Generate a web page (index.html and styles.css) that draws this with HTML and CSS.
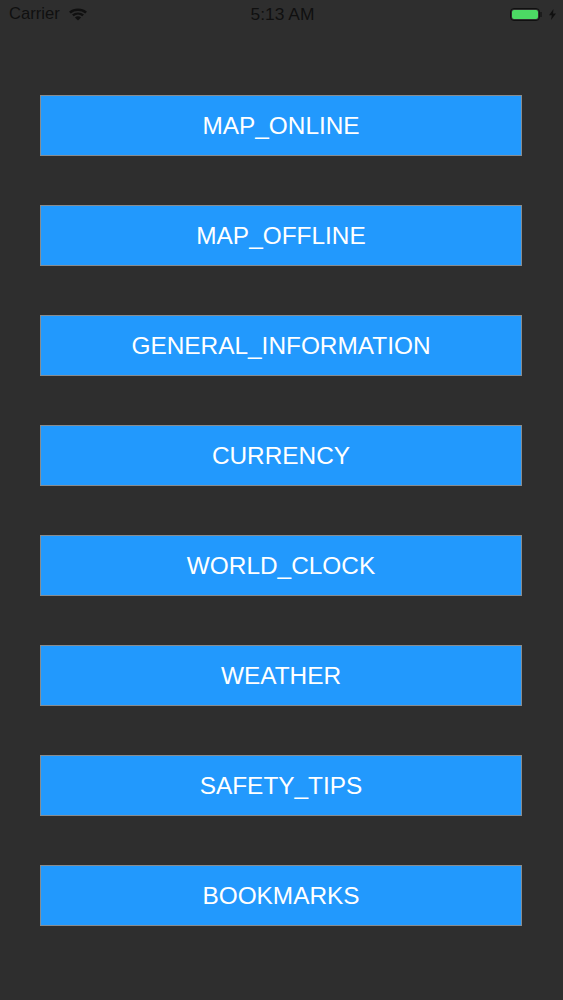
FILE: index.html
```html
<!DOCTYPE html>
<html lang="en">
<head>
    <meta charset="UTF-8">
    <meta name="viewport" content="width=device-width, initial-scale=1.0">
    <title>Menu</title>
    <link rel="stylesheet" href="styles.css">
</head>
<body>

    <div class="status-bar">
        <div class="status-left">
            <span>Carrier</span>
            <svg class="wifi" width="20" height="13" viewBox="0 0 20 15" preserveAspectRatio="none">
                <path d="M10 14.500 6.900 10.900a4.600 4.600 0 0 1 6.200 0z"/>
                <path d="M5.700 9.500 4 7.600a9 9 0 0 1 12 0l-1.700 1.900a6.500 6.500 0 0 0-8.600 0z"/>
                <path d="M2.800 6.300 1 4.300a13 13 0 0 1 18 0l-1.800 2a10.500 10.500 0 0 0-14.400 0z"/>
            </svg>
        </div>
        <div class="status-time">5:13 AM</div>
        <div class="status-right">
            <div class="battery"><div class="battery-level"></div></div>
            <div class="battery-nub"></div>
            <svg class="bolt" width="7" height="11" viewBox="0 0 7 12" preserveAspectRatio="none">
                <path d="M4.500 0 0 6.800h2.800L2 12l5-7.200H4z"/>
            </svg>
        </div>
    </div>

    <div class="menu">
        <button class="menu-button">MAP_ONLINE</button>
        <button class="menu-button">MAP_OFFLINE</button>
        <button class="menu-button">GENERAL_INFORMATION</button>
        <button class="menu-button">CURRENCY</button>
        <button class="menu-button">WORLD_CLOCK</button>
        <button class="menu-button">WEATHER</button>
        <button class="menu-button">SAFETY_TIPS</button>
        <button class="menu-button">BOOKMARKS</button>
    </div>

</body>
</html>
```

FILE: styles.css
```css
* {
    box-sizing: border-box;
    margin: 0;
    padding: 0;
    font-family: "Liberation Sans", Arial, sans-serif;
}

body {
    background-color: #2e2e2e;
    height: 1000px;
    overflow: hidden;
}

.status-bar {
    display: grid;
    grid-template-columns: 1fr auto 1fr;
    align-items: center;
    height: 28px;
    padding: 0 7px 0 9px;
    font-size: 16.600px;
    color: #101010;
}

.status-left {
    display: flex;
    align-items: center;
    gap: 8px;
}

.wifi {
    fill: #101010;
}

.status-time {
    font-size: 17.400px;
}

.status-right {
    display: flex;
    align-items: center;
    justify-content: flex-end;
}

.battery {
    width: 30px;
    height: 13px;
    padding: 1px;
    border: 1px solid #101010;
    border-radius: 4px;
}

.battery-level {
    height: 100%;
    background: #4cd964;
    border-radius: 2px;
}

.battery-nub {
    width: 2px;
    height: 5px;
    margin-right: 7px;
    background: #1c1c1c;
}

.bolt {
    fill: #101010;
}

.menu {
    display: flex;
    flex-direction: column;
    gap: 49px;
    padding: 67px 41px 0 40px;
}

.menu-button {
    width: 100%;
    height: 61px;
    font-size: 24.400px;
    color: white;
    background: #2299fd;
    border: 1px solid #868c90;
}
```
